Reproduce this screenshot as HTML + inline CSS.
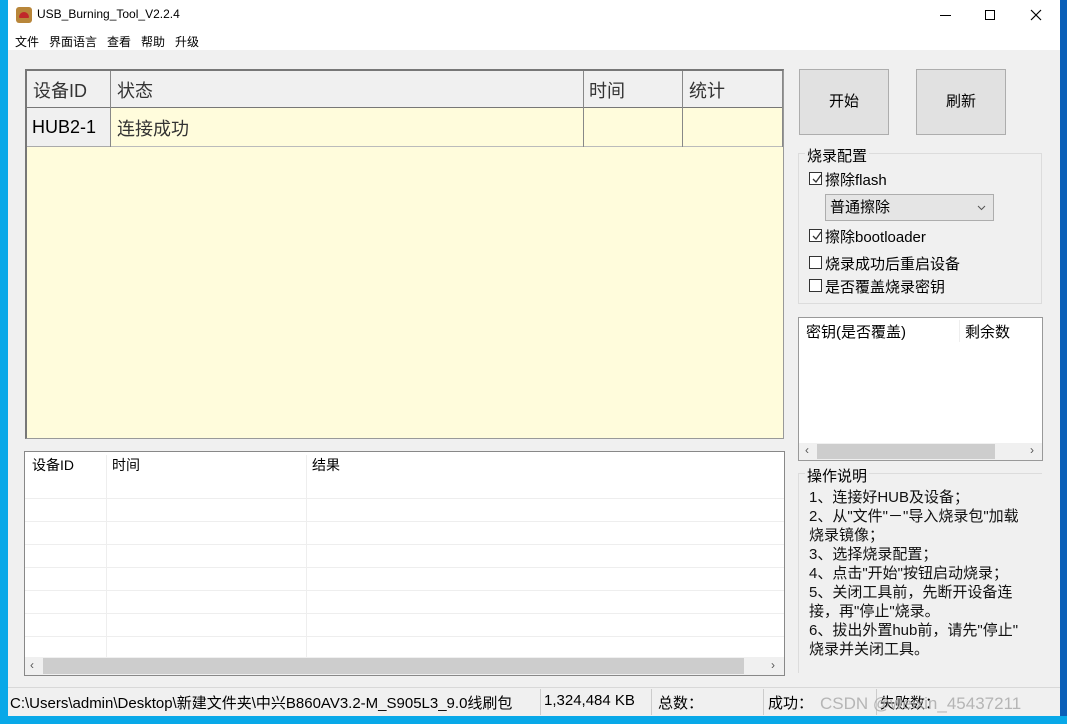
<!DOCTYPE html>
<html><head><meta charset="utf-8"><style>
*{margin:0;padding:0;box-sizing:border-box}
body{width:1067px;height:724px;overflow:hidden;background:#0a7fd4;position:relative;font-family:"Liberation Sans","Noto Sans CJK SC",sans-serif;color:#000}
.a{position:absolute}
.win{left:8px;top:0;width:1052px;height:716px;background:#f0f0f0}
.t{font-size:12px;white-space:nowrap}
.cb{position:absolute;width:13px;height:13px;border:1px solid #333;background:#fff}
.cb svg{position:absolute;left:1px;top:1px}
</style></head><body>
<div class="a" style="left:1060px;top:0;width:7px;height:724px;background:#0a5fb8"></div>
<div class="a" style="left:0;top:0;width:8px;height:724px;background:#08a8e8"></div>
<div class="a" style="left:0;top:716px;width:1067px;height:8px;background:#08a8e8"></div>
<div class="a win"></div>
<div class="a" style="left:8px;top:0;width:1052px;height:50px;background:#fff"></div>
<div class="a" style="left:16px;top:7px;width:16px;height:16px;border-radius:3px;background:#b8863a"><div class="a" style="left:3px;top:5px;width:10px;height:6px;background:#c0282a;border-radius:5px 5px 1px 1px"></div></div>
<div class="a t" style="left:37px;top:7px;font-size:12px">USB_Burning_Tool_V2.2.4</div>
<div class="a" style="left:940px;top:15px;width:11px;height:1px;background:#000"></div>
<div class="a" style="left:985px;top:10px;width:10px;height:10px;border:1px solid #000"></div>
<svg class="a" style="left:1030px;top:9px" width="12" height="12"><path d="M1 1L11 11M11 1L1 11" stroke="#000" stroke-width="1.2"/></svg>
<div class="a t" style="left:15px;top:33px">文件&nbsp;&nbsp;&nbsp;界面语言&nbsp;&nbsp;&nbsp;查看&nbsp;&nbsp;&nbsp;帮助&nbsp;&nbsp;&nbsp;升级</div>
<div class="a" style="left:25px;top:69px;width:759px;height:370px;background:#fffcdc;border:1px solid #999;border-top:2px solid #777;border-left:2px solid #777"></div>
<div class="a" style="left:27px;top:71px;width:756px;height:37px;background:#f0f0f0;border-bottom:1px solid #777"></div>
<div class="a" style="left:27px;top:108px;width:83px;height:39px;background:#f0f0f0;border-bottom:1px solid #aaa"></div>
<div class="a" style="left:110px;top:146px;width:673px;height:1px;background:#bbb"></div>
<div class="a" style="left:110px;top:71px;width:1px;height:76px;background:#888"></div>
<div class="a" style="left:583px;top:71px;width:1px;height:76px;background:#888"></div>
<div class="a" style="left:682px;top:71px;width:1px;height:76px;background:#888"></div>
<div class="a" style="left:782px;top:71px;width:1px;height:76px;background:#888"></div>
<div class="a t" style="left:33px;top:77px;font-size:18px;color:#333">设备ID</div>
<div class="a t" style="left:117px;top:77px;font-size:18px;color:#333">状态</div>
<div class="a t" style="left:589px;top:77px;font-size:18px;color:#333">时间</div>
<div class="a t" style="left:689px;top:77px;font-size:18px;color:#333">统计</div>
<div class="a t" style="left:32px;top:117px;font-size:18px">HUB2-1</div>
<div class="a t" style="left:117px;top:115px;font-size:18px;color:#333">连接成功</div>
<div class="a" style="left:24px;top:451px;width:761px;height:225px;background:#fff;border:1px solid #888"></div>
<div class="a" style="left:106px;top:455px;width:1px;height:202px;background:#eee"></div>
<div class="a" style="left:306px;top:455px;width:1px;height:202px;background:#eee"></div>
<div class="a" style="left:25px;top:498px;width:759px;height:1px;background:#eee;box-shadow:0 23px 0 #eee,0 46px 0 #eee,0 69px 0 #eee,0 92px 0 #eee,0 115px 0 #eee,0 138px 0 #eee"></div>
<div class="a t" style="left:32px;top:455px;font-size:14px">设备ID</div>
<div class="a t" style="left:112px;top:455px;font-size:14px">时间</div>
<div class="a t" style="left:312px;top:455px;font-size:14px">结果</div>
<div class="a" style="left:25px;top:657px;width:759px;height:18px;background:#f0f0f0"></div>
<div class="a" style="left:43px;top:658px;width:701px;height:16px;background:#cdcdcd"></div>
<div class="a t" style="left:30px;top:658px;color:#555">‹</div>
<div class="a t" style="left:771px;top:658px;color:#555">›</div>
<div class="a" style="left:799px;top:69px;width:90px;height:66px;background:#e1e1e1;border:1px solid #adadad;font-size:15px;text-align:center;line-height:64px">开始</div>
<div class="a" style="left:916px;top:69px;width:90px;height:66px;background:#e1e1e1;border:1px solid #adadad;font-size:15px;text-align:center;line-height:64px">刷新</div>
<div class="a" style="left:798px;top:153px;width:244px;height:151px;border:1px solid #dcdcdc"></div>
<div class="a t" style="left:805px;top:145px;font-size:15px;background:#f0f0f0;padding:0 2px">烧录配置</div>
<div class="cb" style="left:809px;top:172px"><svg width="11" height="11"><path d="M2 5L5 8L10 1" stroke="#333" fill="none" stroke-width="1.3"/></svg></div>
<div class="a t" style="left:825px;top:169px;font-size:15px">擦除flash</div>
<div class="a" style="left:825px;top:194px;width:169px;height:27px;background:#e5e5e5;border:1px solid #adadad;font-size:15px;line-height:25px;padding-left:4px">普通擦除<svg style="position:absolute;right:7px;top:10px" width="9" height="6"><path d="M1 1L4.5 4.5L8 1" stroke="#555" fill="none"/></svg></div>
<div class="cb" style="left:809px;top:229px"><svg width="11" height="11"><path d="M2 5L5 8L10 1" stroke="#333" fill="none" stroke-width="1.3"/></svg></div>
<div class="a t" style="left:825px;top:226px;font-size:15px">擦除bootloader</div>
<div class="cb" style="left:809px;top:256px"></div>
<div class="a t" style="left:825px;top:253px;font-size:15px">烧录成功后重启设备</div>
<div class="cb" style="left:809px;top:279px"></div>
<div class="a t" style="left:825px;top:276px;font-size:15px">是否覆盖烧录密钥</div>
<div class="a" style="left:798px;top:317px;width:245px;height:144px;background:#fff;border:1px solid #999"></div>
<div class="a t" style="left:806px;top:321px;font-size:15px">密钥(是否覆盖)</div>
<div class="a" style="left:959px;top:320px;width:1px;height:22px;background:#eee"></div>
<div class="a t" style="left:965px;top:321px;font-size:15px">剩余数</div>
<div class="a" style="left:799px;top:443px;width:243px;height:17px;background:#f0f0f0"></div>
<div class="a" style="left:817px;top:444px;width:178px;height:15px;background:#cdcdcd"></div>
<div class="a t" style="left:805px;top:443px;color:#555">‹</div>
<div class="a t" style="left:1030px;top:443px;color:#555">›</div>
<div class="a" style="left:798px;top:473px;width:244px;height:200px;border-left:1px solid #dcdcdc;border-top:1px solid #dcdcdc"></div>
<div class="a t" style="left:805px;top:465px;font-size:15px;background:#f0f0f0;padding:0 2px">操作说明</div>
<div class="a" style="left:809px;top:488px;font-size:15px;line-height:19px;width:235px;color:#111">1、连接好HUB及设备；<br>2、从"文件"－"导入烧录包"加载<br>烧录镜像；<br>3、选择烧录配置；<br>4、点击"开始"按钮启动烧录；<br>5、关闭工具前，先断开设备连<br>接，再"停止"烧录。<br>6、拔出外置hub前，请先"停止"<br>烧录并关闭工具。</div>
<div class="a" style="left:8px;top:687px;width:1052px;height:1px;background:#d8d8d8"></div>
<div class="a t" style="left:10px;top:692px;font-size:15px;width:530px;overflow:hidden">C:\Users\admin\Desktop\新建文件夹\中兴B860AV3.2-M_S905L3_9.0线刷包</div>
<div class="a" style="left:540px;top:689px;width:1px;height:26px;background:#ccc"></div>
<div class="a t" style="left:544px;top:692px;font-size:15px">1,324,484 KB</div>
<div class="a" style="left:651px;top:689px;width:1px;height:26px;background:#ccc"></div>
<div class="a t" style="left:658px;top:692px;font-size:15px">总数：</div>
<div class="a" style="left:763px;top:689px;width:1px;height:26px;background:#ccc"></div>
<div class="a t" style="left:768px;top:692px;font-size:15px">成功：</div>
<div class="a" style="left:876px;top:689px;width:1px;height:26px;background:#ccc"></div>
<div class="a t" style="left:880px;top:692px;font-size:15px">失败数：</div>
<div class="a t" style="left:820px;top:694px;font-size:17px;color:rgba(170,170,170,.85)">CSDN @weixin_45437211</div>
</body></html>
